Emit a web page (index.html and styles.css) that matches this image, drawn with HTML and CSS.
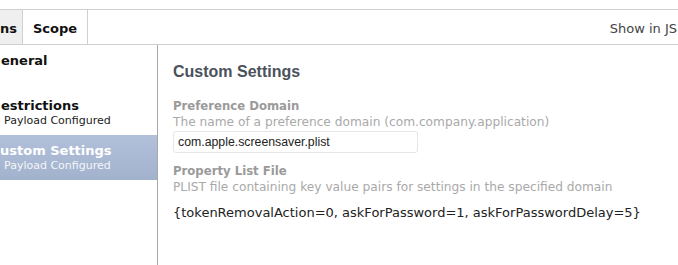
FILE: index.html
```html
<!DOCTYPE html>
<html lang="en">
<head>
    <meta charset="UTF-8">
    <title>Configuration Profile - Custom Settings</title>
    <link rel="stylesheet" href="styles.css">
</head>
<body>
    <div class="page">
        <!-- Abas superiores (recortadas na borda esquerda) -->
        <div class="top-tabs">
            <div class="top-tab active">ns</div>
            <div class="top-tab">Scope</div>
            <div class="spacer"></div>
            <div class="json-link">Show in JS</div>
        </div>

        <div class="main">
            <!-- Lista de payloads -->
            <div class="sidebar">
                <div class="payload-item">
                    <div class="payload-name">eneral</div>
                </div>
                <div class="payload-item">
                    <div class="payload-name">estrictions</div>
                    <div class="payload-count">Payload Configured</div>
                </div>
                <div class="payload-item selected">
                    <div class="payload-name">ustom Settings</div>
                    <div class="payload-count">Payload Configured</div>
                </div>
            </div>

            <!-- Conteúdo do payload -->
            <div class="content">
                <h2 class="section-title">Custom Settings</h2>

                <div class="field">
                    <div class="field-label">Preference Domain</div>
                    <div class="field-help">The name of a preference domain (com.company.application)</div>
                    <div class="field-input">com.apple.screensaver.plist</div>
                </div>

                <div class="field">
                    <div class="field-label">Property List File</div>
                    <div class="field-help">PLIST file containing key value pairs for settings in the specified domain</div>
                    <div class="field-value">{tokenRemovalAction=0, askForPassword=1, askForPasswordDelay=5}</div>
                </div>
            </div>
        </div>
    </div>
</body>
</html>
```

FILE: styles.css
```css
/* Layout geral */
body { margin: 0; padding: 0; background: #fff; overflow: hidden; font-family: "DejaVu Sans", Verdana, sans-serif; color: #222; }
.page { padding-top: 9px; height: 256px; display: flex; flex-direction: column; }

/* Abas do topo */
.top-tabs { display: flex; align-items: stretch; height: 34px; border-top: 1px solid #d0d0d0; border-bottom: 1px solid #d0d0d0; }
.top-tab { display: flex; align-items: center; padding: 3px 10px 0 10px; font-size: 13px; font-weight: bold; color: #111; border-right: 1px solid #d0d0d0; }
.top-tab.active { background: #efefef; padding-left: 0; padding-right: 5px; }
.spacer { flex: 1; }
.json-link { display: flex; align-items: center; font-size: 13px; color: #444; padding: 3px 1px 0 0; }

/* Corpo principal */
.main { flex: 1; display: flex; }
.sidebar { width: 157px; border-right: 1px solid #a8a8a8; }
.payload-item { height: 45px; box-sizing: border-box; padding: 8px 0 0 0; }
.payload-item.selected { background: linear-gradient(#b2c0da, #a2b2cd); }
.payload-name { font-size: 13px; line-height: 16px; font-weight: bold; color: #111; padding-left: 1px; }
.payload-count { font-size: 11px; line-height: 14px; color: #222; padding-left: 4px; }
.selected .payload-name { color: #fff; padding-left: 0; }
.selected .payload-count { color: #f4f6fa; }

/* Conteúdo */
.content { flex: 1; padding: 18px 0 0 15px; }
.section-title { margin: 0 0 17px; font-family: "Liberation Sans", Arial, sans-serif; font-size: 16px; line-height: 18px; font-weight: bold; color: #4b525c; }
.field { margin-bottom: 10px; }
.field-label { font-size: 11.7px; font-weight: bold; color: #9a9a9a; line-height: 16px; }
.field-help { font-size: 12.2px; color: #a9a9a9; line-height: 16px; }
.field-input { margin-top: 1px; width: 235px; height: 20px; border: 1px solid #e6e6e6; border-radius: 3px; padding: 0 4px; font-family: "Liberation Sans", Arial, sans-serif; font-size: 12.3px; color: #222; line-height: 21px; }
.field-value { margin-top: 10px; font-size: 13px; line-height: 16px; color: #222; }
```
